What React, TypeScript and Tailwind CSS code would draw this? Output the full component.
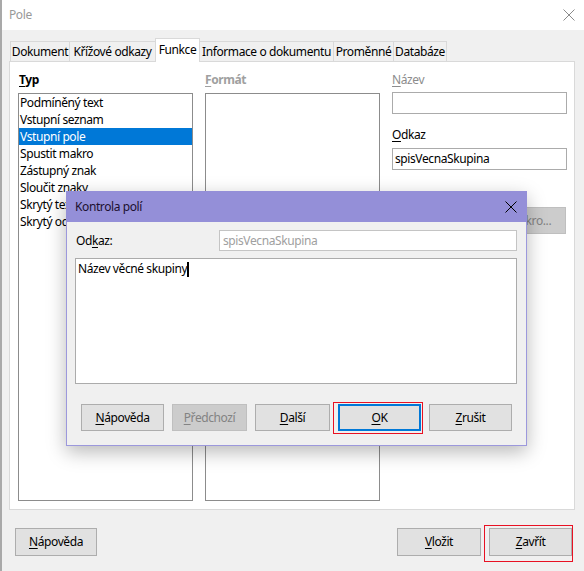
import React from 'react';

const font = "font-['Noto_Sans',sans-serif]";

// mnemonic letter
const M: React.FC<{ children: React.ReactNode }> = ({ children }) => (
  <span className="underline underline-offset-[2px] decoration-1">{children}</span>
);

interface BtnProps {
  children: React.ReactNode;
  className?: string;
  disabled?: boolean;
}

const Btn: React.FC<BtnProps> = ({ children, className = '', disabled }) => (
  <div
    className={`flex items-center justify-center border ${
      disabled ? 'bg-[#cccccc] border-[#bfbfbf] text-[#838383]' : 'bg-[#e1e1e1] border-[#adadad] text-black'
    } ${className}`}
  >
    {children}
  </div>
);

const CloseIcon: React.FC<{ className?: string }> = ({ className }) => (
  <svg width="12" height="12" viewBox="0 0 12 12" className={className}>
    <path d="M0.5 0.5 L11.5 11.5 M11.5 0.5 L0.5 11.5" stroke="currentColor" strokeWidth="1" fill="none" />
  </svg>
);

const tabs = [
  { label: 'Dokument', w: 'w-[59px]' },
  { label: 'Křížové odkazy', w: 'w-[86px]' },
  { label: 'Funkce', w: 'w-[45px]', active: true },
  { label: 'Informace o dokumentu', w: 'w-[133px]' },
  { label: 'Proměnné', w: 'w-[60px]' },
  { label: 'Databáze', w: 'w-[54px]', last: true },
];

const types = [
  'Podmíněný text',
  'Vstupní seznam',
  'Vstupní pole',
  'Spustit makro',
  'Zástupný znak',
  'Sloučit znaky',
  'Skrytý text',
  'Skrytý odstavec',
];

export default function App() {
  return (
    <div
      className={`relative w-[584px] h-[571px] overflow-hidden bg-[#f0f0f0] border-l-2 border-[#a9a9a9] text-[12px] leading-[16px] tracking-[-0.4px] text-black ${font}`}
    >
      {/* Title bar */}
      <div className="h-[30px] bg-white flex items-center pl-[7px] pr-[9px]">
        <span className="text-[#999999]">Pole</span>
        <CloseIcon className="ml-auto text-[#8a8a8a]" />
      </div>

      {/* Tabs + panel */}
      <div className="pl-[7px] pt-[8px]">
        <div className="flex items-end h-[23px] ml-[1px]">
          {tabs.map((t, i) => (
            <div
              key={t.label}
              className={`${t.w} flex items-center justify-center border-t border-[#d9d9d9] whitespace-nowrap ${
                t.active
                  ? 'relative z-10 h-[24px] -mb-px bg-white border-l border-r pb-[2px]'
                  : 'h-[20px] bg-[#f0f0f0] ' + (i === 3 ? '' : 'border-l ') + (t.last ? 'border-r' : '')
              }`}
            >
              {t.label}
            </div>
          ))}
        </div>

        <div className="w-[566px] h-[449px] bg-white border border-[#d9d9d9] pl-[8px] pt-[10px]">
          <div className="grid grid-cols-[175px_175px_175px] gap-x-[12px]">
            {/* Typ */}
            <div className="flex flex-col">
              <div className="font-bold h-[16px] pl-[1px]">
                <M>T</M>yp
              </div>
              <div className="mt-[5px] h-[408px] border border-[#8c8c8c] bg-white">
                {types.map((t, i) => (
                  <div
                    key={t}
                    className={`h-[17px] flex items-center pl-[1px] whitespace-nowrap ${
                      i === 2 ? 'bg-[#0078d7] text-white' : ''
                    }`}
                  >
                    {t}
                  </div>
                ))}
              </div>
            </div>

            {/* Formát */}
            <div className="flex flex-col">
              <div className="font-bold h-[16px] text-[#a0a0a0]">
                <M>F</M>ormát
              </div>
              <div className="mt-[5px] h-[408px] border border-[#8c8c8c] bg-white" />
            </div>

            {/* Right column */}
            <div className="flex flex-col">
              <div className="h-[16px] text-[#8c8c8c]">
                <M>N</M>ázev
              </div>
              <div className="mt-[4px] h-[22px] border border-[#ababab] bg-white" />
              <div className="mt-[13px] h-[16px]">
                <M>O</M>dkaz
              </div>
              <div className="mt-[5px] h-[22px] border border-[#ababab] bg-white flex items-center pl-[2px]">
                spisVecnaSkupina
              </div>
              <Btn disabled className="mt-[37px] h-[27px] w-[72px] ml-auto mr-[1px]">
                Makro...
              </Btn>
            </div>
          </div>
        </div>
      </div>

      {/* Bottom buttons */}
      <div className="flex items-center mt-[18px] pl-[13px] pr-[12px]">
        <Btn className="w-[82px] h-[28px]">
          <M>N</M>ápověda
        </Btn>
        <Btn className="ml-auto w-[84px] h-[28px]">
          <M>V</M>ložit
        </Btn>
        <div className="relative ml-[8px]">
          <Btn className="w-[83px] h-[28px]">
            <M>Z</M>avřít
          </Btn>
          <div className="absolute left-[-5px] right-[-1px] top-[-3px] bottom-[-6px] border border-[#e81123]" />
        </div>
      </div>

      {/* Kontrola polí dialog */}
      <div className="absolute left-[64px] top-[191px] w-[461px] h-[255px] flex flex-col shadow-[0_6px_18px_rgba(0,0,0,0.28)]">
        <div className="h-[31px] bg-[#948fd8] flex items-center pl-[9px] pr-[10px] text-[#1c1030]">
          <span>Kontrola polí</span>
          <CloseIcon className="ml-auto text-black" />
        </div>
        <div className="flex-1 bg-[#f0f0f0] border border-t-0 border-[#9c98dc] pl-[8px] pr-[9px] pt-[8px]">
          <div className="flex items-center h-[21px]">
            <div className="w-[144px] pl-[1px]">
              Od<M>k</M>az:
            </div>
            <div className="flex-1 h-[21px] border border-[#c4c4c4] bg-white flex items-center pl-[3px] text-[#a0a0a0]">
              spisVecnaSkupina
            </div>
          </div>
          <div className="mt-[7px] h-[126px] border border-[#ababab] bg-white pl-[2px] pt-[2px] flex items-start">
            <span>Název věcné skupiny</span>
            <span className="inline-block w-[2px] h-[15px] bg-black mt-[1px]" />
          </div>
          <div className="flex gap-[8px] mt-[20px] ml-[6px]">
            <Btn className="w-[83px] h-[27px]">
              <M>N</M>ápověda
            </Btn>
            <Btn disabled className="w-[75px] h-[27px]">
              <M>P</M>ředchozí
            </Btn>
            <Btn className="w-[75px] h-[27px]">
              <M>D</M>alší
            </Btn>
            <div className="relative">
              <div className="w-[83px] h-[27px] flex items-center justify-center bg-[#e1e1e1] border-2 border-[#0078d7]">
                <M>O</M>K
              </div>
              <div className="absolute left-[-5px] right-[-2px] top-[-2px] bottom-[-3px] border border-[#e81123]" />
            </div>
            <Btn className="w-[83px] h-[27px]">
              <M>Z</M>rušit
            </Btn>
          </div>
        </div>
      </div>
    </div>
  );
}
